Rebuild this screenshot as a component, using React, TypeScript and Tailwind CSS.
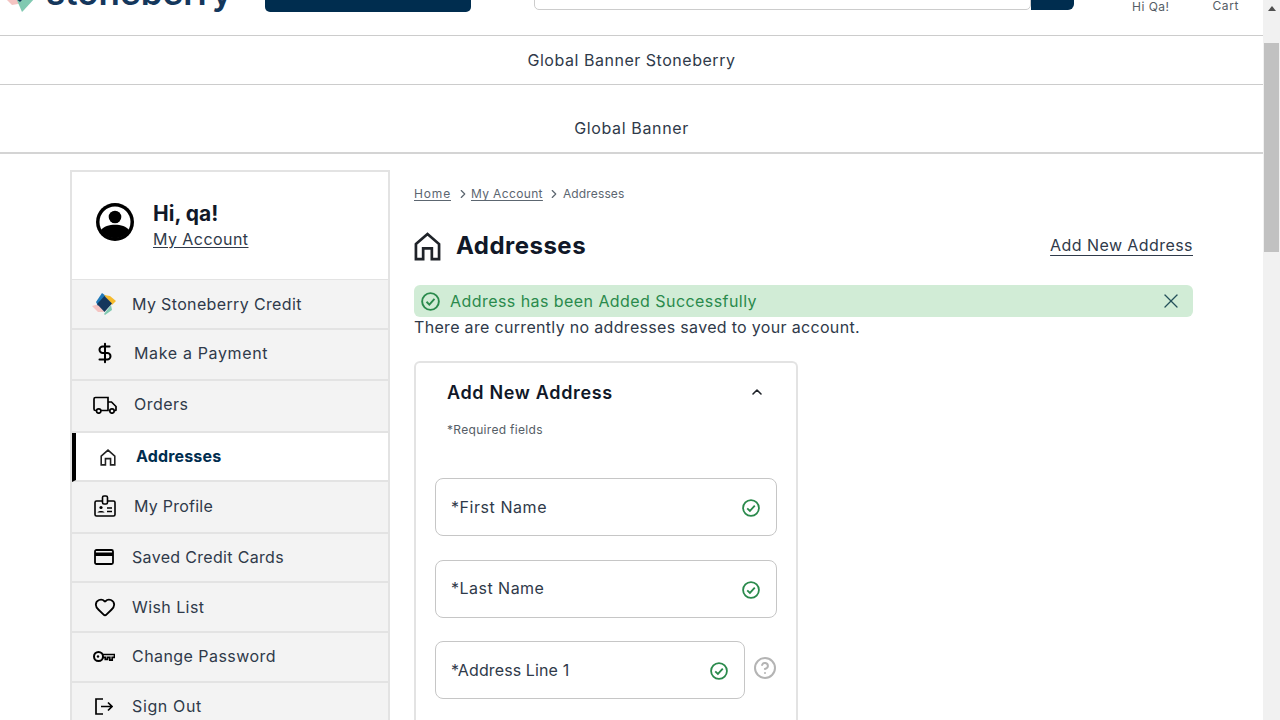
import React from "react";
import { ChevronRight, ChevronUp, CircleHelp, DollarSign, Heart, X } from "lucide-react";

const font = { fontFamily: '"Inter", "Liberation Sans", sans-serif' };

function HomeIcon({ className }: { className: string }) {
  return (
    <svg viewBox="0 0 28 30" fill="none" stroke="currentColor" strokeWidth="2.800" className={className}>
      <path d="M2 12.5 14 2l12 10.5V28h-7.5V17h-9v11H2z" strokeLinejoin="miter" />
    </svg>
  );
}

function CheckIcon({ className }: { className: string }) {
  return (
    <svg viewBox="0 0 20 20" fill="none" stroke="#2a8a4c" strokeWidth="2" className={className}>
      <circle cx="10" cy="10" r="8.800" />
      <path d="M5.800 10.300l3 3 5.400-6" />
    </svg>
  );
}

function BrandMark() {
  return (
    <svg viewBox="0 0 24 24" className="w-[24px] h-[24px]">
      <path d="M0 14 7 12l5 8-6 0z" fill="#f4c4c2" />
      <path d="M12 22 19 13l1 5-7 5z" fill="#80c9b1" />
      <path d="M4 10 10 1l4 3-8 10z" fill="#1f78b8" />
      <path d="M12 3 18 4l6 5-4 4z" fill="#f6bb2d" />
      <path d="M12.500 4 20 11.500 12.500 20 5 12z" fill="#14375c" />
    </svg>
  );
}

function TruckIcon() {
  return (
    <svg viewBox="0 0 24 18" className="w-[24px] h-[18px]" fill="none" stroke="#000" strokeWidth="1.700">
      <path d="M3.500 14.500H2.500A1.500 1.500 0 0 1 1 13V3a1.500 1.500 0 0 1 1.500-1.500H15v13H8" />
      <path d="M15 6h3.500l4.500 4.500V14a.5.5 0 0 1-.5.5h-1M16 14.500h1" />
      <circle cx="5.700" cy="15" r="2.200" />
      <circle cx="19" cy="15" r="2.200" />
    </svg>
  );
}

function CardIcon() {
  return (
    <svg viewBox="0 0 20 16" className="w-[20px] h-[16px]" fill="none">
      <rect x="1" y="1" width="18" height="14" rx="1.500" stroke="#000" strokeWidth="1.800" />
      <rect x="1" y="3.500" width="18" height="3.500" fill="#000" />
    </svg>
  );
}

function BadgeIcon() {
  return (
    <svg viewBox="0 0 22 22" className="w-[22px] h-[22px]" fill="none" stroke="#000" strokeWidth="1.600">
      <rect x="1" y="6" width="20" height="15" rx="1.500" />
      <rect x="8.500" y="1" width="5" height="8" rx="1.500" fill="#f3f3f3" />
      <circle cx="7" cy="12.500" r="1.600" fill="#000" stroke="none" />
      <path d="M3.500 17.500c.5-2 6.500-2 7 0z" fill="#000" stroke="none" />
      <path d="M13 13h5M13 16.500h5" strokeWidth="1.300" />
    </svg>
  );
}

function KeyIcon() {
  return (
    <svg viewBox="0 0 22 13" className="w-[22px] h-[13px]" fill="none" stroke="#000" strokeWidth="2">
      <circle cx="5.500" cy="6.500" r="4.500" />
      <circle cx="5" cy="6.500" r="1.200" fill="#000" stroke="none" />
      <path d="M10 4.500H21.500v2.800h-2.300v2.900h-2.400V7.300h-2.300v2H12.300v-2H10" strokeWidth="1.700" />
    </svg>
  );
}

function SignOutIcon() {
  return (
    <svg viewBox="0 0 18 17" className="w-[18px] h-[17px] ml-[1px]" fill="none" stroke="#000" strokeWidth="1.700">
      <path d="M8 1H1v15h7" />
      <path d="M6 8.500h11M13 4.500l4 4-4 4" />
    </svg>
  );
}

function UserIcon() {
  return (
    <svg viewBox="0 0 38 38" className="w-[38px] h-[38px] mb-[8px] shrink-0">
      <circle cx="19" cy="19" r="19" fill="#000" />
      <circle cx="19" cy="19" r="15.500" fill="#fff" />
      <circle cx="19" cy="14" r="6.300" fill="#000" />
      <path d="M5 27c5-7 23-7 28 0-6 11-22 11-28 0z" fill="#000" />
    </svg>
  );
}

const rows = [
  { label: "My Stoneberry Credit", h: "h-[50px]", pl: "pl-[20px]", w: "w-[40px]", pb: "", icon: <BrandMark />, ls: "tracking-[0.0225em]" },
  { label: "Make a Payment", h: "h-[51px]", pl: "pl-[22px]", w: "w-[40px]", pb: "pb-[3px]", icon: <DollarSign size={22} strokeWidth={2.2} color="#000" />, ls: "tracking-[0.04em]" },
  { label: "Orders", h: "h-[52px]", pl: "pl-[21px]", w: "w-[41px]", pb: "pb-[3px]", icon: <TruckIcon />, ls: "tracking-[0.03em] mb-[2px]" },
  { label: "My Profile", h: "h-[52px]", pl: "pl-[22px]", w: "w-[40px]", pb: "pb-[2px]", icon: <BadgeIcon />, ls: "tracking-[0.015em]" },
  { label: "Saved Credit Cards", h: "h-[49px]", pl: "pl-[22px]", w: "w-[38px]", pb: "pb-[1px]", icon: <CardIcon />, ls: "tracking-[0.02em]" },
  { label: "Wish List", h: "h-[50px]", pl: "pl-[22px]", w: "w-[38px]", pb: "", icon: <Heart size={22} strokeWidth={2} color="#000" />, ls: "tracking-[0.026em]" },
  { label: "Change Password", h: "h-[50px]", pl: "pl-[21px]", w: "w-[39px]", pb: "pb-[2px]", icon: <KeyIcon />, ls: "tracking-[0.0275em]" },
  { label: "Sign Out", h: "h-[48px]", pl: "pl-[22px]", w: "w-[38px]", pb: "", icon: <SignOutIcon />, ls: "tracking-[0.04em]" },
];

function Row({ r }: { r: (typeof rows)[number] }) {
  return (
    <div className={`${r.h} ${r.pl} ${r.pb} flex items-center bg-[#f3f3f3] border-b-2 border-[#e3e3e3] text-[16px] text-[#2f3a4a]`}>
      <div className={`${r.w} shrink-0 flex items-center`}>{r.icon}</div>
      <span className={r.ls}>{r.label}</span>
    </div>
  );
}

function Field({ label, full, tw }: { label: string; full?: boolean; tw: string }) {
  return (
    <div className={`${full ? "w-[342px]" : "w-[310px]"} shrink-0 h-[58px] border border-[#c6c6c6] rounded-[8px] flex items-center justify-between pl-[15px] pr-[16px]`}>
      <span className={`text-[16px] text-[#2f3a4a] ${tw}`}>{label}</span>
      <CheckIcon className="w-[18px] h-[18px] mt-[2px] shrink-0" />
    </div>
  );
}

export default function App() {
  return (
    <div className="h-[720px] w-[1280px] overflow-hidden flex bg-white" style={font}>
      <div className="w-[1263px] shrink-0 flex flex-col">
        <header className="h-[36px] shrink-0 border-b border-[#cccccc] flex items-end overflow-hidden">
          <div className="flex items-end w-[265px] shrink-0 pl-[5px]">
            <svg viewBox="0 0 30 14" className="w-[30px] h-[14px] shrink-0 mb-[23px]">
              <path d="M0 0h13l4 4-4 2-6 1z" fill="#f4c4c2" />
              <path d="M11 0h19l-11 12-2 2z" fill="#80c9b1" />
              <path d="M10 0h9l-4 4z" fill="#14375c" />
            </svg>
            <span className="text-[35px] leading-[35px] font-semibold text-[#14375c] mb-[25px] ml-[11px]">stoneberry</span>
          </div>
          <div className="w-[206px] h-[40px] bg-[#002d4f] rounded-[5px] shrink-0 mb-[23px]" />
          <div className="ml-[63px] w-[497px] h-[40px] border border-[#cccccc] rounded-[5px] shrink-0 mb-[25px]" />
          <div className="w-[43px] h-[40px] bg-[#002d4f] rounded-r-[6px] shrink-0 mb-[25px]" />
          <div className="ml-[58px] mb-[22px] text-[12px] leading-[12px] text-[#555d66] tracking-[0.04em]">Hi Qa!</div>
          <div className="ml-[43px] mb-[24px] text-[12px] leading-[11px] text-[#555d66] tracking-[0.05em]">Cart</div>
        </header>
        <div className="h-[49px] shrink-0 border-b border-[#cccccc] flex items-center justify-center text-[16px] text-[#2f3a4a] tracking-[0.033em]">Global Banner Stoneberry</div>
        <div className="h-[69px] shrink-0 border-b-2 border-[#d4d4d4] flex items-end justify-center pb-[14px] text-[16px] leading-[20px] text-[#2f3a4a] tracking-[0.04em]">Global Banner</div>

        <div className="flex items-start pl-[70px] pt-[16px]">
          <aside className="w-[320px] shrink-0 border-2 border-[#e3e3e3] border-b-0">
            <div className="h-[108px] bg-white border-b border-[#e3e3e3] flex items-center pl-[24px]">
              <UserIcon />
              <div className="ml-[19px] mt-[-1px]">
                <div className="text-[21px] leading-[26px] font-bold text-[#101828]">Hi, qa!</div>
                <a className="block mt-[1px] text-[16px] leading-[22px] text-[#2f3a4a] underline underline-offset-2 tracking-[0.0275em]">My Account</a>
              </div>
            </div>
            {rows.slice(0, 3).map((r) => <Row key={r.label} r={r} />)}
            <div className="h-[49px] pb-[2px] flex items-center bg-white border-b-2 border-[#e3e3e3] border-l-4 border-l-black pl-[24px]">
              <HomeIcon className="w-[16px] h-[17px] text-[#222] shrink-0 mt-[3px]" />
              <span className="ml-[20px] text-[16px] font-bold text-[#002d4f] tracking-[0.01em]">Addresses</span>
            </div>
            {rows.slice(3).map((r) => <Row key={r.label} r={r} />)}
          </aside>

          <main className="ml-[24px] w-[779px] shrink-0">
            <nav className="mt-[17px] flex items-center h-[14px] text-[12px] leading-[14px] text-[#5c6670]">
              <a className="underline underline-offset-2 tracking-[0.07em]">Home</a>
              <ChevronRight size={14} strokeWidth={2} className="ml-[5px] mr-[1px]" />
              <a className="underline underline-offset-2 tracking-[0.03em]">My Account</a>
              <ChevronRight size={14} strokeWidth={2} className="ml-[4px] mr-[2px]" />
              <span className="tracking-[0.012em]">Addresses</span>
            </nav>
            <div className="mt-[29px] flex items-center justify-between h-[32px]">
              <div className="flex items-center">
                <HomeIcon className="w-[27px] h-[29px] text-[#1f2329] shrink-0" />
                <h1 className="ml-[15px] text-[24px] font-bold text-[#101828] tracking-[0.02em]">Addresses</h1>
              </div>
              <a className="mb-[2px] text-[16px] text-[#2f3a4a] underline underline-offset-4 tracking-[0.027em]">Add New Address</a>
            </div>
            <div className="mt-[23px] h-[32px] bg-[#d1ecd6] rounded-[6px] flex items-center justify-between pl-[7px] pr-[10px]">
              <div className="flex items-center">
                <CheckIcon className="w-[19px] h-[19px] shrink-0" />
                <span className="ml-[10px] text-[16px] text-[#2a8a4c] tracking-[0.0275em]">Address has been Added Successfully</span>
              </div>
              <X size={24} strokeWidth={1.3} color="#24505a" />
            </div>
            <p className="h-[20px] leading-[20px] text-[16px] text-[#2f3a4a] tracking-[0.02em]">There are currently no addresses saved to your account.</p>

            <section className="mt-[24px] w-[384px] h-[400px] border-2 border-[#e3e3e3] border-b-0 rounded-t-[6px] pl-[19px] pr-[20px]">
              <div className="mt-[16px] pl-[12px] pr-[11px] flex items-center justify-between h-[26px]">
                <h2 className="text-[18px] font-semibold text-[#101828] tracking-[0.0365em]">Add New Address</h2>
                <ChevronUp size={16} strokeWidth={2.4} color="#1f2329" />
              </div>
              <p className="mt-[17px] pl-[12px] text-[12px] leading-[16px] text-[#555d66] tracking-[0.026em]">*Required fields</p>
              <div className="mt-[40px] flex flex-col gap-[24px]">
                <Field label="*First Name" full tw="tracking-[0.035em]" />
                <Field label="*Last Name" full tw="tracking-[0.03em] mb-[2px]" />
                <div className="flex items-center mt-[-1px]">
                  <Field label="*Address Line 1" tw="tracking-[0.007em]" />
                  <CircleHelp size={24} strokeWidth={2} color="#b4b4b4" className="ml-[8px] mt-[-4px] shrink-0" />
                </div>
              </div>
            </section>
          </main>
        </div>
      </div>

      <div className="w-[17px] h-[720px] shrink-0 bg-[#f1f1f1] flex flex-col items-center">
        <div className="mt-[6px] h-0 w-0 border-x-[4px] border-x-transparent border-b-[5px] border-b-[#505050]" />
        <div className="mt-[32px] w-[15px] h-[209px] bg-[#c1c1c1]" />
      </div>
    </div>
  );
}
